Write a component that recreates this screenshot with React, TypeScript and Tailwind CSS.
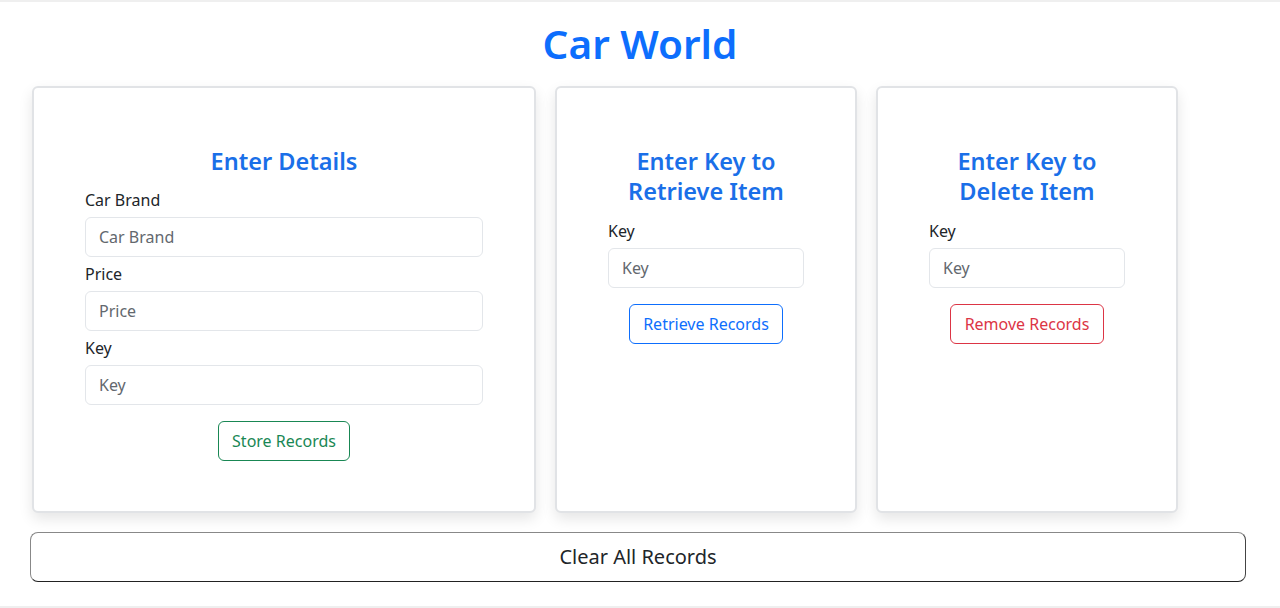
import { useState } from 'react'

const font = "font-['Segoe_UI','Noto_Sans',sans-serif]"

function Field({ label, value, onChange }: { label: string; value: string; onChange: (v: string) => void }) {
  return (
    <div className="w-full">
      <label className="block text-[16px] leading-[24px] text-[#212529] mb-[5px]">{label}</label>
      <input
        value={value}
        onChange={(e) => onChange(e.target.value)}
        placeholder={label}
        className="block w-full h-[40px] px-[13px] text-[16px] text-[#212529] placeholder:text-[#63686e] bg-white border border-[#e3e6ea] rounded-[6px] outline-none"
      />
    </div>
  )
}

function Card({ title, width, gap, children }: { title: React.ReactNode; width: string; gap: string; children: React.ReactNode }) {
  return (
    <div
      className={`${width} bg-white border-2 border-[#e1e3e6] rounded-[6px] shadow-[0_6px_14px_rgba(0,0,0,0.10)] pt-[58px] px-[51px] flex flex-col items-center`}
    >
      <h3 className={`${gap} text-[23.5px] leading-[30px] font-semibold text-[#1a6fe8] text-center`}>{title}</h3>
      {children}
    </div>
  )
}

const btn = 'mt-[16px] h-[40px] px-[13.5px] text-[16px] rounded-[6px] bg-white border'

export default function App() {
  const [brand, setBrand] = useState('')
  const [price, setPrice] = useState('')
  const [key, setKey] = useState('')
  const [getKey, setGetKey] = useState('')
  const [delKey, setDelKey] = useState('')

  return (
    <div className={`${font} w-[1280px] h-[608px] bg-white border-t-2 border-b-2 border-[#efefef] flex flex-col`}>
      <h1 className="text-center text-[40.5px] leading-[52px] font-semibold text-[#0d6efd] mt-[16px] mb-[16px]">Car World</h1>

      <div className="flex items-stretch gap-[19px] pl-[32px] h-[427px]">
        <Card title="Enter Details" width="w-[504px]" gap="mb-[12px]">
          <div className="w-full flex flex-col gap-[5px]">
            <Field label="Car Brand" value={brand} onChange={setBrand} />
            <Field label="Price" value={price} onChange={setPrice} />
            <Field label="Key" value={key} onChange={setKey} />
          </div>
          <button className={`${btn} text-[#198754] border-[#198754]`}>Store Records</button>
        </Card>

        <Card title={<>Enter Key to<br />Retrieve Item</>} width="w-[302px]" gap="mb-[13px]">
          <Field label="Key" value={getKey} onChange={setGetKey} />
          <button className={`${btn} text-[#0d6efd] border-[#0d6efd]`}>Retrieve Records</button>
        </Card>

        <Card title={<>Enter Key to<br />Delete Item</>} width="w-[302px]" gap="mb-[13px]">
          <Field label="Key" value={delKey} onChange={setDelKey} />
          <button className={`${btn} text-[#dc3545] border-[#dc3545]`}>Remove Records</button>
        </Card>
      </div>

      <div className="pl-[30px] mt-[19px]">
        <button className="w-[1216px] h-[50px] text-[20px] text-[#212529] bg-white border border-[#888] border-b-[#222] border-r-[#444] rounded-[8px]">
          Clear All Records
        </button>
      </div>
    </div>
  )
}
